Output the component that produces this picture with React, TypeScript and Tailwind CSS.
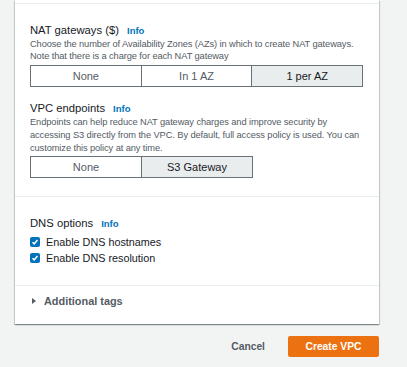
import React from 'react'

const font = { fontFamily: '"Liberation Sans", Arial, sans-serif' }

function Segmented({ options, selected, width }: { options: string[]; selected: number; width: string }) {
  return (
    <div className={`flex h-[22px] border border-[#687078] ${width}`}>
      {options.map((o, i) => (
        <div
          key={o}
          className={`flex-1 flex items-center justify-center text-[11px] ${
            i > 0 ? 'border-l border-[#687078]' : ''
          } ${i === selected ? 'bg-[#eaeded] text-[#16191f]' : 'bg-white text-[#545b64]'}`}
        >
          {o}
        </div>
      ))}
    </div>
  )
}

function Title({ children }: { children: React.ReactNode }) {
  return (
    <div className="flex items-baseline gap-[8px] leading-[14px]">
      <span className="text-[11.25px] text-[#16191f]">{children}</span>
      <span className="text-[9.5px] font-bold text-[#0073bb]">Info</span>
    </div>
  )
}

function Check({ label }: { label: string }) {
  return (
    <div className="flex items-center gap-[6px] h-[16px]">
      <span className="w-[10px] h-[10px] rounded-[2px] bg-[#0073bb] flex items-center justify-center">
        <svg width="8" height="8" viewBox="0 0 8 8">
          <path d="M1.5 4.2 L3.2 5.8 L6.5 2" fill="none" stroke="#fff" strokeWidth="1.5" />
        </svg>
      </span>
      <span className="text-[10.8px] text-[#16191f]">{label}</span>
    </div>
  )
}

export default function App() {
  return (
    <div className="w-full h-[367px] bg-[#f2f3f3] overflow-hidden" style={font}>
      <div className="ml-[15px] w-[364px] bg-white shadow-[0_1px_1px_0_rgba(0,28,36,0.3),1px_1px_1px_0_rgba(0,28,36,0.15),-1px_1px_1px_0_rgba(0,28,36,0.15)]">
        <div className="h-[3px]" />
        <div className="border-t border-[#eaeded] px-[15px] pt-[19px] pb-[18px]">
          <Title>NAT gateways ($)</Title>
          <p className="text-[9.3px] tracking-[-0.1px] leading-[12px] text-[#545b64] whitespace-nowrap">
            Choose the number of Availability Zones (AZs) in which to create NAT gateways.
            <br />
            Note that there is a charge for each NAT gateway
          </p>
          <div className="mt-[3px]">
            <Segmented options={['None', 'In 1 AZ', '1 per AZ']} selected={2} width="w-[333px]" />
          </div>

          <div className="mt-[14px]">
            <Title>VPC endpoints</Title>
          </div>
          <p className="text-[9.3px] tracking-[-0.1px] leading-[13px] text-[#545b64] whitespace-nowrap">
            Endpoints can help reduce NAT gateway charges and improve security by
            <br />
            accessing S3 directly from the VPC. By default, full access policy is used. You can
            <br />
            customize this policy at any time.
          </p>
          <div className="mt-[1px]">
            <Segmented options={['None', 'S3 Gateway']} selected={1} width="w-[223px]" />
          </div>
        </div>

        <div className="border-t border-[#eaeded] px-[15px] pt-[19px] pb-[19px]">
          <Title>DNS options</Title>
          <div className="mt-[3px]">
            <Check label="Enable DNS hostnames" />
            <Check label="Enable DNS resolution" />
          </div>
        </div>

        <div className="border-t border-[#eaeded] pl-[17px] pt-[8px] pb-[16px] flex items-center gap-[8px] leading-[14px]">
          <svg width="4" height="6" viewBox="0 0 4 6">
            <path d="M0 0 L4 3 L0 6 Z" fill="#545b64" />
          </svg>
          <span className="text-[10.9px] font-bold text-[#545b64]">Additional tags</span>
        </div>
      </div>

      <div className="w-[379px] mt-[12px] flex items-center justify-end gap-[23px]">
        <span className="text-[10.3px] font-bold text-[#545b64]">Cancel</span>
        <div className="w-[91px] h-[21px] bg-[#ec7211] rounded-[2px] flex items-center justify-center text-[10.3px] font-bold text-white">
          Create VPC
        </div>
      </div>
    </div>
  )
}
